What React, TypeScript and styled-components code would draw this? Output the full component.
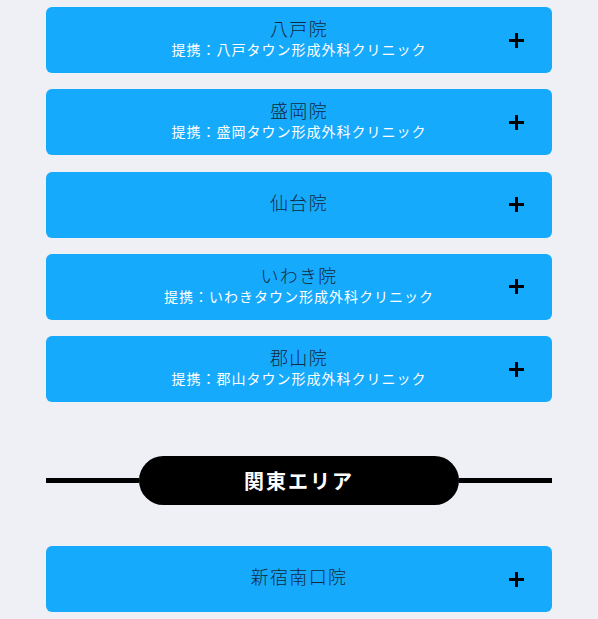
import React from "react";
import styled, { createGlobalStyle } from "styled-components";

const Global = createGlobalStyle`
  html, body { margin: 0; padding: 0; background: #eef0f5; }
  body { font-family: "Noto Sans CJK JP", "Noto Sans", sans-serif; }
`;

const Page = styled.div`
  width: 506px;
  padding: 7px 46px 0;
  display: flex;
  flex-direction: column;
`;

const List = styled.div`
  display: flex;
  flex-direction: column;
  gap: 16.25px;
`;

const Card = styled.div`
  height: 66px;
  box-sizing: border-box;
  background: #16aafc;
  border-radius: 6px;
  display: grid;
  grid-template-columns: 1fr auto 1fr;
  align-items: center;
`;

const Texts = styled.div`
  grid-column: 2;
  display: flex;
  flex-direction: column;
  align-items: center;
  text-align: center;
  padding-bottom: 4px;
`;

const Title = styled.div`
  font-size: 18px;
  font-weight: 300;
  line-height: 20px;
  padding-bottom: 2px;
  letter-spacing: 1.3px;
  color: #13293f;
`;

const Sub = styled.div`
  font-size: 14px;
  line-height: 18px;
  letter-spacing: 1px;
  color: #ffffff;
`;

const Plus = styled.svg`
  grid-column: 3;
  justify-self: end;
  margin-right: 28px;
  width: 15px;
  height: 15px;
`;

const Divider = styled.div`
  margin: 54px 0 41px;
  display: grid;
  grid-template-columns: 1fr 320px 1fr;
  align-items: center;
`;

const Line = styled.div`
  height: 5px;
  background: #000;
`;

const Pill = styled.div`
  height: 49px;
  border-radius: 25px;
  background: #000;
  color: #fff;
  display: flex;
  align-items: center;
  justify-content: center;
  font-size: 20px;
  font-weight: 700;
  letter-spacing: 2px;
`;

const PlusIcon = () => (
  <Plus viewBox="0 0 15 15">
    <rect x="6" y="0" width="3" height="15" fill="#000" />
    <rect x="0" y="6" width="15" height="3" fill="#000" />
  </Plus>
);

type Clinic = { name: string; partner?: string };

const tohoku: Clinic[] = [
  { name: "八戸院", partner: "提携：八戸タウン形成外科クリニック" },
  { name: "盛岡院", partner: "提携：盛岡タウン形成外科クリニック" },
  { name: "仙台院" },
  { name: "いわき院", partner: "提携：いわきタウン形成外科クリニック" },
  { name: "郡山院", partner: "提携：郡山タウン形成外科クリニック" },
];

const ClinicCard = ({ c }: { c: Clinic }) => (
  <Card>
    <Texts>
      <Title>{c.name}</Title>
      {c.partner && <Sub>{c.partner}</Sub>}
    </Texts>
    <PlusIcon />
  </Card>
);

export default function App() {
  return (
    <>
      <Global />
      <Page>
        <List>
          {tohoku.map((c) => (
            <ClinicCard key={c.name} c={c} />
          ))}
        </List>
        <Divider>
          <Line />
          <Pill>関東エリア</Pill>
          <Line />
        </Divider>
        <List>
          <ClinicCard c={{ name: "新宿南口院" }} />
        </List>
      </Page>
    </>
  );
}
